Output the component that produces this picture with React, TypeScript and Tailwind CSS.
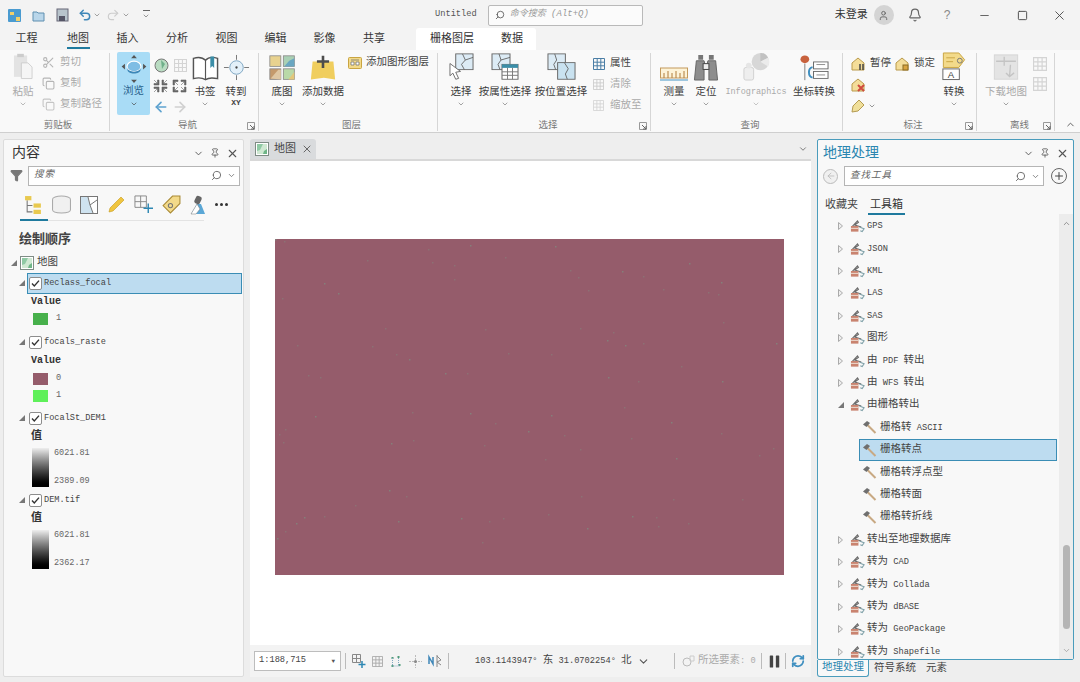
import { ReactNode } from "react";
import { X, ChevronDown, ChevronUp, Search, Pin, Bell, User, Minus, Square, Filter, RefreshCw, ArrowLeft, ArrowRight, Plus, Scissors, Copy, Pause, Undo2, Redo2 } from "lucide-react";

const font = "font-['Liberation_Mono','Noto_Sans_CJK_SC',monospace]";

// latin runs are set smaller than the CJK ones next to them
function Txt({ children }: { children: string }) {
  return (
    <>
      {children.split(/([\x00-\x7f°]+)/).map((run, i) =>
        i % 2 ? (
          <span key={i} className="text-[8.700px]">{run}</span>
        ) : (
          <span key={i}>{run}</span>
        )
      )}
    </>
  );
}

// ---- drawn icons ----
function MapIcon({ size = 14 }: { size?: number }) {
  return (
    <svg width={size} height={size} viewBox="0 0 14 14" className="shrink-0">
      <rect x="0.5" y="0.5" width="13" height="13" fill="#fff" stroke="#7f8c85" />
      <path d="M2 2h10v10H2z" fill="#cfe8d2" />
      <path d="M2 2h6L5 8l-3 1z" fill="#8fc9a4" />
      <path d="M9 9l3-2v5H8z" fill="#6fb587" />
    </svg>
  );
}

function ToolboxIcon() {
  return (
    <svg width="15" height="14" viewBox="0 0 16 14" className="shrink-0">
      <path d="M2 8L8 1.5 9 3 5 6l7 2" fill="none" stroke="#6b6b6b" strokeWidth="1.2" />
      <path d="M1 7h8v6H1z" fill="#c9836f" />
      <path d="M1 9h8v1H1z" fill="#efe2d8" />
      <path d="M10 8l5 2-2 3-2-1" fill="none" stroke="#7fa0a8" strokeWidth="1.2" />
    </svg>
  );
}

function HammerIcon() {
  return (
    <svg width="15" height="15" viewBox="0 0 15 15" className="shrink-0">
      <path d="M5.5 5l8 8" stroke="#c8a983" strokeWidth="2" />
      <path d="M1 4.5L5 1l3 2-3.5 4z" fill="#6f6f6f" />
    </svg>
  );
}

function Check() {
  return (
    <span className="flex h-[13px] w-[13px] shrink-0 items-center justify-center rounded-[2px] border border-[#8d8d8d] bg-white">
      <svg width="9" height="9" viewBox="0 0 9 9">
        <path d="M1 4.5l2.3 2.5L8 1.6" fill="none" stroke="#333" strokeWidth="1.4" />
      </svg>
    </span>
  );
}

const Expanded = () => (
  <svg width="6" height="6" viewBox="0 0 6 6" className="shrink-0">
    <path d="M6 0v6H0z" fill="#777" />
  </svg>
);

const Collapsed = () => (
  <svg width="5" height="8" viewBox="0 0 5 8" className="shrink-0">
    <path d="M.5.5l4 3.5-4 3.5z" fill="#eee" stroke="#aaa" />
  </svg>
);

const Basemap = () => (
  <svg width="27" height="26" viewBox="0 0 32 32" preserveAspectRatio="none">
    <rect x="1" y="1" width="13" height="13" fill="#e8d28f" stroke="#8a8a8a" />
    <rect x="17" y="1" width="13" height="13" fill="#a9d0b4" stroke="#8a8a8a" />
    <path d="M18 14l6-7 6-3v10z" fill="#6aa7c2" />
    <rect x="1" y="17" width="13" height="13" fill="#c49a6c" stroke="#8a8a8a" />
    <path d="M2 29l9-11h3v12z" fill="#dfc7a3" />
    <rect x="17" y="17" width="13" height="13" fill="#b9d9a8" stroke="#8a8a8a" />
    <path d="M23 30l7-9v9z" fill="#e4c77b" />
  </svg>
);

const AddData = () => (
  <svg width="26" height="26" viewBox="0 0 30 32" preserveAspectRatio="none">
    <path d="M3 8h24l2 22-13-2-15 2z" fill="#f0ce5e" />
    <path d="M15 1v15M8 8h14" stroke="#4d4d4d" strokeWidth="3" />
  </svg>
);

const SelectMap = () => (
  <svg width="25" height="28" viewBox="0 0 26 32" preserveAspectRatio="none">
    <rect x="7" y="1" width="18" height="18" fill="#dcebf5" stroke="#666" />
    <path d="M14 1l3 7-4 5 3 6M17 8l8-3" fill="none" stroke="#666" />
    <path d="M1 12l11 9-5 1 3 7-3 1-3-7-3 3z" fill="#fff" stroke="#666" />
  </svg>
);

const AttrSelect = () => (
  <svg width="28" height="28" viewBox="0 0 28 32" preserveAspectRatio="none">
    <rect x="1" y="1" width="18" height="18" fill="#dcebf5" stroke="#666" />
    <path d="M8 1l2 7-3 5 2 6M10 8l9-3" fill="none" stroke="#666" />
    <rect x="11" y="13" width="16" height="17" fill="#fff" stroke="#666" />
    <rect x="11" y="13" width="16" height="4" fill="#3b8ea8" />
    <path d="M11 21.5h16M11 25.5h16M16.500 17v13M21.500 17v13" stroke="#777" />
  </svg>
);

const LocSelect = () => (
  <svg width="29" height="28" viewBox="0 0 30 32" preserveAspectRatio="none">
    <rect x="1" y="1" width="18" height="18" fill="#dcebf5" stroke="#666" />
    <path d="M8 1l2 7-3 5 2 6" fill="none" stroke="#666" />
    <rect x="11" y="11" width="18" height="19" fill="#c9e2f0" stroke="#666" />
    <path d="M18 11l4 7-3 6 2 6" fill="none" stroke="#666" />
  </svg>
);

const Explore = () => (
  <svg width="28" height="28" viewBox="0 0 30 34">
    <path d="M15 0l3.500 4h-7zM15 34l-3.500-4h7zM0 14l4-3.500v7zM30 14l-4-3.500v7z" fill="#555" />
    <ellipse cx="15" cy="14" rx="8.500" ry="6.500" fill="#7fbde4" stroke="#fff" strokeWidth="1.500" />
    <path d="M7 15c0 7 16 7 16 0v3c0 6-16 6-16 0z" fill="#3c87b8" />
  </svg>
);

const Book = () => (
  <svg width="27" height="26" viewBox="0 0 28 26">
    <path d="M14 5C10 1 5 2 1.500 3v21c4-1 9-1 12.500 1 3-2 8-2 12.500-1V3c-3-1-9-2-12.500 2z" fill="#fff" stroke="#555" strokeWidth="1.500" />
    <path d="M14 5v20" stroke="#555" strokeWidth="1.200" />
    <path d="M19 1h4v12l-2-2-2 2z" fill="#3b8ea8" />
  </svg>
);

const GoTo = () => (
  <svg width="27" height="27" viewBox="0 0 28 28">
    <circle cx="14" cy="14" r="7" fill="#e3f0f9" stroke="#7ea6c2" />
    <circle cx="14" cy="14" r="1.200" fill="#444" />
    <path d="M14 1v5M14 22v5M1 14h5M22 14h5" stroke="#777" />
  </svg>
);

const Measure = () => (
  <svg width="28" height="14" viewBox="0 0 28 14">
    <rect x="0.500" y="1" width="27" height="10" fill="#fdf3d7" stroke="#c39a5c" />
    <path d="M4 11V6M8 11V4M12 11V6M16 11V4M20 11V6M24 11V4" stroke="#b07d3a" />
    <path d="M0 13h28" stroke="#7fb6d6" strokeWidth="1.500" />
  </svg>
);

const Binoculars = () => (
  <svg width="26" height="27" viewBox="0 0 26 28">
    <path d="M5 1h5v5H5zM16 1h5v5h-5z" fill="#777" />
    <path d="M3 7h8l1 4h2l1-4h8l2 20h-9V16h-5v11H1z" fill="#8d8d8d" stroke="#666" />
    <rect x="10" y="10" width="6" height="6" fill="#eee" stroke="#444" />
  </svg>
);

const Infographics = () => (
  <svg width="29" height="29" viewBox="0 0 30 30">
    <circle cx="19" cy="10" r="9" fill="#d7d7d7" />
    <path d="M19 10V1a9 9 0 0 1 8 5z" fill="#c2c2c2" />
    <path d="M19 10l8-4a9 9 0 0 1 0 9z" fill="#ebebeb" />
    <rect x="2" y="16" width="10" height="13" rx="2" fill="#eee" stroke="#d0d0d0" />
    <circle cx="7" cy="14" r="3" fill="#e6e6e6" />
  </svg>
);

const ConvertCoord = () => (
  <svg width="29" height="26" viewBox="0 0 30 30" preserveAspectRatio="none">
    <path d="M5 10v19" stroke="#777" />
    <circle cx="5" cy="5" r="4.500" fill="#c8623e" />
    <rect x="14" y="8" width="15" height="8" fill="#fff" stroke="#666" />
    <rect x="14" y="19" width="15" height="8" fill="#fff" stroke="#666" />
    <path d="M17 11h9M17 23h9" stroke="#888" />
    <path d="M13 14c-5 1-5 11 0 12" fill="none" stroke="#3f8fc0" strokeWidth="2" />
  </svg>
);

const TagConvert = () => (
  <svg width="26" height="29" viewBox="0 0 26 30">
    <path d="M2 1h16l6 7-6 8H2z" fill="#f3da8a" stroke="#c9a542" />
    <path d="M5 6h9M5 10h7" stroke="#c9a542" />
    <circle cx="19" cy="9" r="2.500" fill="none" stroke="#777" />
    <rect x="1.500" y="17.500" width="17" height="11" fill="#fff" stroke="#666" />
    <text x="10" y="27" fontSize="10" textAnchor="middle" fill="#444" fontFamily="Liberation Sans">A</text>
  </svg>
);

const Download = () => (
  <svg width="26" height="27" viewBox="0 0 28 30">
    <rect x="1" y="1" width="26" height="27" fill="#e4e4e4" stroke="#d4d4d4" />
    <path d="M3 8h22M12 3v10M19 12l-1 12M14 21l4 4 5-4" stroke="#c4c4c4" strokeWidth="1.500" fill="none" />
  </svg>
);

const House = ({ mark }: { mark: "pause" | "lock" | "x" }) => (
  <svg width="15" height="15" viewBox="0 0 15 15" className="shrink-0">
    <path d="M1 7l6-5 6 5v7H1z" fill="#f4dd99" stroke="#b99a4c" />
    {mark === "pause" && <path d="M9 8v6M12 8v6" stroke="#444" strokeWidth="1.500" />}
    {mark === "lock" && <rect x="8" y="9" width="5" height="5" fill="#d9a441" stroke="#8a6a20" />}
    {mark === "x" && <path d="M7 8l6 6M13 8l-6 6" stroke="#d04b3e" strokeWidth="2" />}
  </svg>
);

const Grid = ({ size = 12, color = "#bbb" }: { size?: number; color?: string }) => (
  <svg width={size} height={size} viewBox="0 0 12 12" className="shrink-0">
    <path d="M.5.5h11v11H.5zM4.200.5v11M7.800.5v11M.5 4.200h11M.5 7.800h11" fill="none" stroke={color} />
  </svg>
);

const Dialog = () => (
  <svg width="8" height="8" viewBox="0 0 8 8">
    <path d="M.5.5h7v7h-7z" fill="none" stroke="#999" />
    <path d="M3 3l4 4M7 4v3H4" fill="none" stroke="#666" />
  </svg>
);

// the 4x2 block of fixed-zoom arrows in the nav group
const ZoomArrows = () => {
  const arrow = (x: number, y: number, r: number) => (
    <path key={`${x}-${y}`} d="M0 0h5v1.500H1.500V5H0zM1 1l4 4" transform={`translate(${x} ${y}) rotate(${r} 2.500 2.500)`} fill="#666" stroke="#666" strokeWidth=".6" />
  );
  return (
    <svg width="34" height="14" viewBox="0 0 34 14">
      {arrow(1, 1, 180)}
      {arrow(9, 1, 270)}
      {arrow(20, 1, 0)}
      {arrow(28, 1, 90)}
      {arrow(1, 8, 90)}
      {arrow(9, 8, 0)}
      {arrow(20, 8, 270)}
      {arrow(28, 8, 180)}
    </svg>
  );
};

// ---- ribbon pieces ----
function Large({ w, icon, label, sub, chev = true, off = false }: { w: string; icon: ReactNode; label: string; sub?: string; chev?: boolean; off?: boolean }) {
  return (
    <div className={`flex shrink-0 flex-col items-center ${w}`}>
      <div className="flex h-[28px] items-end justify-center">{icon}</div>
      <span className={`mt-[4px] whitespace-nowrap text-[10.500px] leading-[14px] ${off ? "text-[#aaa]" : "text-[#3c3c3c]"}`}>{label}</span>
      {sub && <span className="text-[8px] font-bold leading-[8px] text-[#444]">{sub}</span>}
      {chev && <ChevronDown size={8} strokeWidth={2} className="mt-[1px] text-[#777]" />}
    </div>
  );
}

function Small({ icon, label, off = false }: { icon: ReactNode; label: string; off?: boolean }) {
  return (
    <div className="flex h-[21px] items-center gap-[3px]">
      <span className="flex w-[17px] justify-center">{icon}</span>
      <span className={`whitespace-nowrap text-[10.500px] ${off ? "text-[#aaa]" : "text-[#444]"}`}>{label}</span>
    </div>
  );
}

function Group({ w, label, launcher, children }: { w: string; label: string; launcher?: boolean; children: ReactNode }) {
  return (
    <div className={`relative flex h-full shrink-0 flex-col border-r border-[#d6d6d6] ${w}`}>
      <div className="flex flex-1 items-start">{children}</div>
      <div className="flex h-[14px] translate-y-[2px] items-center justify-center text-[9.500px] text-[#777]">{label}</div>
      {launcher && (
        <span className="absolute bottom-[1px] right-[3px] flex">
          <Dialog />
        </span>
      )}
    </div>
  );
}

function Ribbon() {
  return (
    <div className="flex h-[83px] shrink-0 border-b border-[#cfcfcf] bg-[#f9f9f9] pb-[1px] pt-[3px]">
      <Group w="w-[110px] pl-[7px]" label="剪贴板">
        <div className="flex w-[32px] flex-col items-center">
          <svg width="24" height="28" viewBox="0 0 26 34">
            <rect x="2" y="3" width="16" height="26" fill="#e3e3e3" />
            <rect x="6" y="1" width="8" height="4" fill="#ccc" />
            <path d="M11 12h8l5 5v14H11z" fill="#f5f5f5" stroke="#c9c9c9" />
          </svg>
          <span className="mt-[4px] text-[10.500px] leading-[14px] text-[#aaa]">粘贴</span>
          <ChevronDown size={8} className="mt-[1px] text-[#999]" />
        </div>
        <div className="-mt-[1px] ml-[1px] flex flex-col">
          <Small off icon={<Scissors size={13} className="text-[#b5b5b5]" />} label="剪切" />
          <Small off icon={<Copy size={13} className="text-[#b5b5b5]" />} label="复制" />
          <Small off icon={<Copy size={13} className="text-[#c5c5c5]" />} label="复制路径" />
        </div>
      </Group>
      <Group w="w-[149px] pl-[7px]" label="导航" launcher>
        <div className="-mt-[1px] flex h-[63px] w-[33px] shrink-0 flex-col items-center rounded-[2px] bg-[#a9dcf6] pt-[3px]">
          <Explore />
          <span className="mt-[2px] text-[10.500px] leading-[13px] text-[#27618c]">浏览</span>
          <ChevronDown size={8} className="mt-[2px] text-[#444]" />
        </div>
        <div className="ml-[2px] flex w-[36px] shrink-0 flex-col items-center">
          <div className="flex h-[22px] items-center gap-[5px] pt-[2px]">
            <svg width="15" height="15" viewBox="0 0 15 15">
              <circle cx="7.500" cy="7.500" r="6.500" fill="#b9dcc2" stroke="#777" />
              <path d="M7 2l4 4-3 5z" fill="#6fb08a" />
            </svg>
            <Grid size={13} color="#d4d4d4" />
          </div>
          <div className="flex h-[22px] items-center">
            <ZoomArrows />
          </div>
          <div className="flex h-[20px] items-center gap-[3px]">
            <ArrowLeft size={16} strokeWidth={2.500} className="text-[#5ea2cf]" />
            <ArrowRight size={16} strokeWidth={2.500} className="text-[#d0d0d0]" />
          </div>
        </div>
        <Large w="w-[34px]" icon={<Book />} label="书签" />
        <Large w="w-[32px] -ml-[2px]" icon={<GoTo />} label="转到" sub="XY" chev={false} />
      </Group>
      <Group w="w-[179px] pl-[7px]" label="图层">
        <Large w="w-[32px]" icon={<Basemap />} label="底图" />
        <Large w="w-[50px] ml-[7px] -translate-x-[7px]" icon={<AddData />} label="添加数据" />
        <div className="-ml-[9px] -mt-[1px]">
          <Small
            icon={
              <svg width="14" height="12" viewBox="0 0 14 12">
                <rect x="0.500" y="0.500" width="13" height="11" rx="1" fill="#f3da8a" stroke="#c9a542" />
                <path d="M3 5h3v3H3zM8 5h3v3H8zM3 3h8" fill="#fff" stroke="#666" strokeWidth="0.700" />
              </svg>
            }
            label="添加图形图层"
          />
        </div>
      </Group>
      <Group w="w-[213px] pl-[8px]" label="选择" launcher>
        <Large w="w-[30px]" icon={<SelectMap />} label="选择" />
        <Large w="w-[54px] ml-[2px]" icon={<AttrSelect />} label="按属性选择" />
        <Large w="w-[54px] ml-[2px]" icon={<LocSelect />} label="按位置选择" chev={false} />
        <div className="ml-[2px] flex flex-col">
          <Small icon={<Grid size={12} color="#4b7ea6" />} label="属性" />
          <Small off icon={<Grid size={11} color="#ccc" />} label="清除" />
          <Small off icon={<Grid size={11} color="#d5d5d5" />} label="缩放至" />
        </div>
      </Group>
      <Group w="w-[192px] pl-[7px]" label="查询">
        <Large w="w-[32px]" icon={<Measure />} label="测量" />
        <Large w="w-[32px]" icon={<Binoculars />} label="定位" />
        <div className="ml-[3px] flex w-[62px] shrink-0 flex-col items-center">
          <div className="flex h-[28px] items-end"><Infographics /></div>
          <span className="mt-[4px] text-[8.500px] leading-[14px] text-[#aaa]">Infographics</span>
          <ChevronDown size={8} className="mt-[1px] text-[#aaa]" />
        </div>
        <Large w="w-[46px] ml-[4px]" icon={<ConvertCoord />} label="坐标转换" chev={false} />
      </Group>
      <Group w="w-[134px] pl-[7px]" label="标注" launcher>
        <div className="flex w-[88px] shrink-0 flex-col">
          <div className="flex">
            <Small icon={<House mark="pause" />} label="暂停" />
            <span className="ml-[3px]"><Small icon={<House mark="lock" />} label="锁定" /></span>
          </div>
          <div className="flex h-[21px] items-center pl-[1px]"><House mark="x" /></div>
          <div className="flex h-[21px] items-center gap-[3px] pl-[1px]">
            <svg width="14" height="14" viewBox="0 0 14 14">
              <path d="M1 13l1-6 6-6 5 5-6 6z" fill="#f0df9a" stroke="#b49b52" />
            </svg>
            <ChevronDown size={8} className="text-[#666]" />
          </div>
        </div>
        <Large w="w-[28px] ml-[2px]" icon={<TagConvert />} label="转换" />
      </Group>
      <Group w="w-[78px] pl-[8px]" label="离线" launcher>
        <Large w="w-[42px]" icon={<Download />} label="下载地图" off />
        <div className="ml-[6px] flex flex-col gap-[6px] pt-[4px]">
          <Grid size={14} color="#d4d4d4" />
          <Grid size={14} color="#d4d4d4" />
        </div>
      </Group>
      <div className="flex flex-1 items-end justify-center pb-[1px] pl-[5px]">
        <ChevronUp size={11} className="text-[#555]" />
      </div>
    </div>
  );
}

function TitleBar() {
  return (
    <div className="flex h-[28px] shrink-0 items-center bg-[#f3f3f3] pl-[8px] pt-[2px]">
      <svg width="13" height="13" viewBox="0 0 13 13">
        <rect width="13" height="13" rx="1" fill="#4a9bd0" />
        <path d="M2 3h4v3H2zM8 8h4v4H8z" fill="#f1d06a" />
      </svg>
      <svg width="13" height="13" viewBox="0 0 13 13" className="ml-[11px]">
        <path d="M1 3h4l1 1h6v8H1z" fill="#b9d6ea" stroke="#5f8fb0" />
      </svg>
      <svg width="13" height="14" viewBox="0 0 13 14" className="ml-[11px]">
        <rect x="1" y="1" width="11" height="12" fill="#b8c4cc" stroke="#667" />
        <rect x="3" y="8" width="6" height="5" fill="#556" />
      </svg>
      <Undo2 size={14} strokeWidth={2.500} className="ml-[9px] text-[#3f87b8]" />
      <ChevronDown size={8} className="ml-[1px] text-[#777]" />
      <Redo2 size={14} className="ml-[5px] text-[#ccc]" />
      <ChevronDown size={8} className="ml-[2px] text-[#777]" />
      <span className="ml-[12px] flex flex-col items-center gap-[1px]">
        <span className="h-px w-[7px] bg-[#666]" />
        <ChevronDown size={8} className="text-[#666]" />
      </span>
      <span className="ml-[285px] text-[8.700px] text-[#555]">Untitled</span>
      <div className="ml-[11px] flex h-[21px] w-[155px] items-center rounded-[2px] border border-[#b9b9b9] bg-[#fbfbfb] pl-[6px]">
        <Search size={10} className="-scale-x-100 text-[#555]" />
        <span className="ml-[5px] text-[9px] italic text-[#999]">命令搜索 (Alt+Q)</span>
      </div>
      <span className="ml-[192px] text-[11px] text-[#333]">未登录</span>
      <span className="ml-[6px] flex h-[20px] w-[20px] items-center justify-center rounded-full bg-[#d4d4d4]">
        <User size={11} className="text-[#666]" />
      </span>
      <Bell size={14} className="ml-[14px] text-[#666]" />
      <span className="ml-[22px] font-['Liberation_Sans'] text-[12px] text-[#888]">?</span>
      <Minus size={13} className="ml-[28px] text-[#666]" />
      <Square size={11} className="ml-[26px] text-[#444]" />
      <X size={15} strokeWidth={1.400} className="ml-[24px] text-[#444]" />
    </div>
  );
}

function TabRow() {
  const tabs: [string, string][] = [
    ["工程", "w-[53px]"],
    ["地图", "w-[50px]"],
    ["插入", "w-[49px]"],
    ["分析", "w-[50px]"],
    ["视图", "w-[49px]"],
    ["编辑", "w-[49px]"],
    ["影像", "w-[49px]"],
    ["共享", "w-[50px]"],
  ];
  return (
    <div className="flex h-[22px] shrink-0 items-start bg-[#f3f3f3]">
      {tabs.map(([t, w]) => (
        <div key={t} className={`flex h-[22px] flex-col items-center pt-[4px] text-[11px] leading-[14px] text-[#333] ${w}`}>
          <span>{t}</span>
          {t === "地图" && <span className="mt-[1px] h-[2px] w-[23px] bg-[#1f7a9e]" />}
        </div>
      ))}
      <div className="ml-[17px] flex h-[22px] w-[120px] items-center justify-between rounded-t-[3px] bg-white pl-[14px] pr-[13px] pt-[1px] text-[11px] text-[#333]">
        <span>栅格图层</span>
        <span>数据</span>
      </div>
    </div>
  );
}

function PanelHead({ title, blue }: { title: string; blue?: boolean }) {
  return (
    <div className="flex h-[24px] shrink-0 items-center justify-between pl-[5px] pr-[4px]">
      <span className={`text-[14px] ${blue ? "text-[#2b86b0]" : "text-[#333]"}`}>{title}</span>
      <span className="flex items-center gap-[6px] text-[#555]">
        <ChevronDown size={11} />
        <Pin size={10} />
        <X size={13} />
      </span>
    </div>
  );
}

function SearchBox({ w, text }: { w: string; text: string }) {
  return (
    <div className={`flex h-[20px] items-center justify-between border border-[#b5b5b5] bg-white pl-[5px] pr-[3px] ${w}`}>
      <span className="text-[9.500px] italic tracking-[1px] text-[#666]">{text}</span>
      <span className="flex items-center gap-[5px] text-[#666]">
        <Search size={11} className="-scale-x-100" />
        <ChevronDown size={9} />
      </span>
    </div>
  );
}

function Legend({ top, low }: { top: string; low: string }) {
  return (
    <div className="flex h-[39px] pl-[28px] text-[8.500px] text-[#666]">
      <div className="h-[39px] w-[17px] bg-gradient-to-b from-[#eeeeee] to-[#000000]" />
      <div className="ml-[5px] flex flex-col justify-between leading-[11px]">
        <span>{top}</span>
        <span>{low}</span>
      </div>
    </div>
  );
}

function Layer({ name, active }: { name: string; active?: boolean }) {
  return (
    <div className="flex h-[22px] items-center pl-[15px] pr-[1px]">
      <Expanded />
      <div className={`ml-[2px] flex h-[21px] flex-1 items-center gap-[2px] pl-[1px] text-[8.600px] text-[#444] ${active ? "border border-[#3a8db5] bg-[#bddcf0]" : "border border-transparent"}`}>
        <Check />
        <span>{name}</span>
      </div>
    </div>
  );
}

function Swatch({ color, label }: { color: string; label: string }) {
  return (
    <div className="flex h-[17px] items-center pl-[29px] text-[8.600px] text-[#666]">
      <span className="h-[12px] w-[15px]" style={{ background: color }} />
      <span className="ml-[8px]">{label}</span>
    </div>
  );
}

function ContentsPanel() {
  return (
    <div className="flex h-[538px] w-[241px] shrink-0 flex-col rounded-[2px] border border-[#dcdcdc] bg-[#f8f8f8] pt-[1px]">
      <div className="pl-[3px]"><PanelHead title="内容" /></div>
      <div className="flex h-[21px] items-center gap-[5px] pl-[6px]">
        <Filter size={13} fill="#777" className="text-[#777]" />
        <SearchBox w="w-[212px]" text="搜索" />
      </div>
      <div className="ml-[16px] mt-[5px] w-[184px] border-b border-[#e3e3e3]">
        <div className="flex h-[27px] items-center gap-[9px] pl-[4px] [&>*]:shrink-0">
          <svg width="19" height="19" viewBox="0 0 18 18">
            <path d="M3 5v11h5M3 10h5" fill="none" stroke="#777" />
            <rect x="1" y="1" width="6" height="4" fill="#e8c94f" />
            <rect x="9" y="8" width="7" height="4" fill="#e8c94f" />
            <rect x="9" y="14" width="7" height="4" fill="#e8c94f" />
          </svg>
          <svg width="19" height="19" viewBox="0 0 18 18">
            <ellipse cx="9" cy="4" rx="8.500" ry="3" fill="#f0f0f0" stroke="#aaa" />
            <path d="M.5 4v10c0 4 17 4 17 0V4" fill="#f0f0f0" stroke="#aaa" />
          </svg>
          <svg width="18" height="18" viewBox="0 0 18 18">
            <rect x=".5" y=".5" width="17" height="17" fill="#fff" stroke="#777" />
            <path d="M1 1h7l2 8 3 8H1z" fill="#cfe3f0" />
            <path d="M8 1l2 8 3 8M10 9l7-5" fill="none" stroke="#777" />
          </svg>
          <svg width="18" height="18" viewBox="0 0 18 18">
            <path d="M2 16l1-4L14 1l3 3L6 15z" fill="#f0c53f" stroke="#c59a1f" strokeWidth=".6" />
          </svg>
          <svg width="19" height="19" viewBox="0 0 20 20">
            <path d="M1 1h12v12H1zM7 1v12M1 7h12" fill="none" stroke="#888" />
            <path d="M15 9v10M10 14h10" stroke="#2d87b3" strokeWidth="1.500" />
          </svg>
          <svg width="19" height="19" viewBox="0 0 18 18">
            <path d="M1 10L10 1h7v7l-9 9z" fill="#f3da8a" stroke="#a98a35" />
            <circle cx="8" cy="10" r="2" fill="none" stroke="#777" />
          </svg>
          <svg width="16" height="20" viewBox="0 0 16 20">
            <path d="M7 9L1 19h14l-4-10z" fill="#5aa7d6" />
            <path d="M7 9l3 5-4 5H1z" fill="#fff" stroke="#777" strokeWidth=".5" />
            <rect x="5" y="1" width="6" height="8" rx="2" transform="rotate(25 8 5)" fill="#666" />
          </svg>
          <span className="flex gap-[2px]">
            <span className="h-[3px] w-[3px] rounded-full bg-[#333]" />
            <span className="h-[3px] w-[3px] rounded-full bg-[#333]" />
            <span className="h-[3px] w-[3px] rounded-full bg-[#333]" />
          </span>
        </div>
        <div className="h-[2px] w-[28px] translate-y-px bg-[#1f7a9e]" />
      </div>
      <div className="ml-[15px] mt-[8px] h-[22px] text-[13px] font-bold leading-[22px] text-[#444]">绘制顺序</div>
      <div className="flex h-[21px] items-center gap-[3px] pl-[7px] pt-[2px] text-[10.500px] text-[#444]">
        <Expanded />
        <MapIcon />
        <span>地图</span>
      </div>
      <Layer name="Reclass_focal" active />
      <div className="h-[15px] pl-[27px] text-[10px] font-bold leading-[15px] text-[#333]">Value</div>
      <div className="pt-[1px]"><Swatch color="#47b04b" label="1" /></div>
      <div className="pt-[4px]"><Layer name="focals_raste" /></div>
      <div className="h-[15px] pl-[27px] text-[10px] font-bold leading-[15px] text-[#333]">Value</div>
      <div className="pt-[2px]">
        <Swatch color="#955c6b" label="0" />
        <Swatch color="#5ff05a" label="1" />
      </div>
      <div className="pt-[3px]"><Layer name="FocalSt_DEM1" /></div>
      <div className="h-[19px] pl-[27px] text-[11px] font-bold leading-[15px] text-[#333]">值</div>
      <Legend top="6021.81" low="2389.09" />
      <div className="pt-[2px]"><Layer name="DEM.tif" /></div>
      <div className="h-[19px] pl-[27px] text-[11px] font-bold leading-[15px] text-[#333]">值</div>
      <Legend top="6021.81" low="2362.17" />
    </div>
  );
}

// fixed speckle positions in the raster
const specks = Array.from({ length: 90 }, (_, i) => ({
  x: (i * 197 + (i * i * 13) % 89) % 505,
  y: (i * 83 + (i * i * 7) % 61) % 332,
}));

function MapView() {
  return (
    <div className="flex h-[538px] w-[561px] shrink-0 flex-col">
      <div className="flex h-[20px] shrink-0 items-end justify-between bg-[#eeeeee]">
        <div className="flex h-[20px] w-[66px] items-center gap-[5px] rounded-t-[3px] bg-[#d9dbdd] pl-[5px] text-[11px] text-[#444]">
          <MapIcon />
          <span>地图</span>
          <X size={12} className="text-[#666]" />
        </div>
        <ChevronDown size={10} className="mb-[5px] mr-[3px] text-[#666]" />
      </div>
      <div className="flex h-[486px] shrink-0 items-start border-t-2 border-[#d8d8d8] bg-white pl-[25px] pt-[78px]">
        <svg width="509" height="336" viewBox="0 0 509 336" className="block">
          <rect width="509" height="336" fill="#955c6b" />
          {specks.map((s, i) => (
            <rect key={i} x={s.x} y={s.y} width="1.500" height="1.500" fill={i % 3 ? "#8a7a78" : "#7f8f80"} opacity="0.7" />
          ))}
        </svg>
      </div>
      <div className="flex h-[32px] shrink-0 items-center bg-[#f3f3f3] pl-[4px] text-[10.500px] text-[#444]">
        <div className="flex h-[20px] w-[87px] items-center justify-between border border-[#bdbdbd] bg-white pl-[4px] pr-[5px] text-[8.700px]">
          <span>1:188,715</span>
          <span className="text-[6px] text-[#555]">▼</span>
        </div>
        <span className="ml-[4px] h-[16px] w-px bg-[#bbb]" />
        <span className="ml-[6px] flex items-center gap-[6px]">
          <svg width="14" height="14" viewBox="0 0 14 14">
            <path d="M.5.5h8v8h-8zM4.500.5v8M.5 4.500h8" fill="none" stroke="#888" />
            <path d="M10 7v7M6.500 10.500h7" stroke="#2d87b3" strokeWidth="1.500" />
          </svg>
          <Grid size={11} color="#aaa" />
          <svg width="14" height="13" viewBox="0 0 13 13">
            <path d="M2 2h2v2H2zM8 1h2v2H8zM2 10h2v2H2zM9 9h2v2H9z" fill="#4f9b78" />
            <path d="M3 11h7M9 3v7M3 3v7" stroke="#7fa6c0" strokeDasharray="1 1" />
          </svg>
          <svg width="13" height="13" viewBox="0 0 13 13">
            <path d="M6.500 0v13M0 6.500h13" stroke="#bbb" strokeDasharray="2 1" />
            <circle cx="6.500" cy="6.500" r="1.500" fill="#888" />
          </svg>
          <svg width="14" height="14" viewBox="0 0 14 14">
            <path d="M1 10V3l4 7V3" fill="none" stroke="#3f87b8" strokeWidth="1.500" />
            <path d="M9 1v12M9 2l4 4-4 2 4 3" fill="none" stroke="#888" />
          </svg>
        </span>
        <span className="ml-[6px] h-[16px] w-px bg-[#bbb]" />
        <span className="ml-[26px] w-[156px] whitespace-pre"><Txt>103.1143947° 东 31.0702254° 北</Txt></span>
        <ChevronDown size={13} className="ml-[6px] text-[#555]" />
        <span className="ml-[24px] h-[16px] w-px bg-[#bbb]" />
        <svg width="14" height="14" viewBox="0 0 14 14" className="ml-[6px] shrink-0">
          <circle cx="6" cy="8" r="4" fill="none" stroke="#bbb" />
          <path d="M9 2h4v5H9z" fill="none" stroke="#ccc" />
        </svg>
        <span className="ml-[3px] w-[57px] whitespace-pre text-[#aaa]"><Txt>所选要素: 0</Txt></span>
        <span className="ml-[6px] h-[16px] w-px bg-[#bbb]" />
        <Pause size={13} fill="#444" strokeWidth={0} className="ml-[6px] scale-125 text-[#444]" />
        <span className="ml-[4px] h-[16px] w-px bg-[#bbb]" />
        <RefreshCw size={14} strokeWidth={3} className="ml-[5px] text-[#3f8fc0]" />
      </div>
    </div>
  );
}

const tools: { name: string; kind?: "tool" | "open" | "sel" }[] = [
  { name: "GPS" },
  { name: "JSON" },
  { name: "KML" },
  { name: "LAS" },
  { name: "SAS" },
  { name: "图形" },
  { name: "由 PDF 转出" },
  { name: "由 WFS 转出" },
  { name: "由栅格转出", kind: "open" },
  { name: "栅格转 ASCII", kind: "tool" },
  { name: "栅格转点", kind: "sel" },
  { name: "栅格转浮点型", kind: "tool" },
  { name: "栅格转面", kind: "tool" },
  { name: "栅格转折线", kind: "tool" },
  { name: "转出至地理数据库" },
  { name: "转为 CAD" },
  { name: "转为 Collada" },
  { name: "转为 dBASE" },
  { name: "转为 GeoPackage" },
  { name: "转为 Shapefile" },
];

function ToolRow({ name, kind }: { name: string; kind?: "tool" | "open" | "sel" }) {
  if (kind === "tool" || kind === "sel") {
    return (
      <div className="flex h-[22.400px] items-center pl-[41px] pr-[2px]">
        <div className={`flex h-[22px] flex-1 items-center gap-[3px] pl-[2px] text-[10.500px] text-[#444] ${kind === "sel" ? "border border-[#3a8db5] bg-[#bddcf0]" : "border border-transparent"}`}>
          <HammerIcon />
          <span className="whitespace-pre"><Txt>{name}</Txt></span>
        </div>
      </div>
    );
  }
  return (
    <div className="flex h-[22.400px] items-center pl-[20px] text-[10.500px] text-[#444]">
      {kind === "open" ? <Expanded /> : <Collapsed />}
      <span className={kind === "open" ? "ml-[6px]" : "ml-[7px]"}><ToolboxIcon /></span>
      <span className="ml-[2px] whitespace-pre"><Txt>{name}</Txt></span>
    </div>
  );
}

function GeoPanel() {
  return (
    <div className="flex h-[538px] w-[257px] shrink-0 flex-col">
      <div className="flex h-[521px] flex-col rounded-[2px] border border-[#4a9cbc] bg-[#f8f8f8] pt-[1px]">
        <PanelHead title="地理处理" blue />
        <div className="flex h-[22px] items-center pl-[5px]">
          <span className="flex h-[15px] w-[15px] items-center justify-center rounded-full border border-[#bbb] bg-[#f0f0f0]">
            <ArrowLeft size={10} className="text-[#bbb]" />
          </span>
          <span className="ml-[6px]"><SearchBox w="w-[200px]" text="查找工具" /></span>
          <span className="ml-[7px] flex h-[16px] w-[16px] items-center justify-center rounded-full border border-[#666]">
            <Plus size={12} className="text-[#444]" />
          </span>
        </div>
        <div className="flex h-[27px] items-start gap-[10px] pl-[7px] pt-[11px] text-[11px] leading-[15px] text-[#444]">
          <span>收藏夹</span>
          <span className="flex flex-col items-center text-[#333]">
            工具箱
            <span className="h-[1.500px] w-[37px] bg-[#1f7a9e]" />
          </span>
        </div>
        <div className="flex min-h-0 flex-1">
          <div className="flex-1 overflow-hidden pt-[1px]">
            {tools.map((t) => (
              <ToolRow key={t.name} name={t.name} kind={t.kind} />
            ))}
          </div>
          <div className="flex w-[14px] shrink-0 flex-col items-center justify-between bg-[#ececec] pb-[4px] pt-[5px]">
            <ChevronUp size={9} className="text-[#777]" />
            <div className="flex flex-col items-center gap-[17px]">
              <span className="h-[84px] w-[7px] rounded-[4px] bg-[#b5b5b5]" />
              <ChevronDown size={9} className="text-[#999]" />
            </div>
          </div>
        </div>
      </div>
      <div className="flex h-[17px] items-center text-[10.500px] text-[#444]">
        <span className="flex h-[17px] w-[52px] items-center justify-center rounded-b-[3px] border border-t-0 border-[#4a9cbc] bg-[#f8f8f8] text-[#2b86b0]">地理处理</span>
        <span className="ml-[5px]">符号系统</span>
        <span className="ml-[10px]">元素</span>
      </div>
    </div>
  );
}

export default function App() {
  return (
    <div className={`flex h-[682px] w-[1080px] flex-col overflow-hidden bg-[#eeeeee] ${font}`}>
      <TitleBar />
      <TabRow />
      <Ribbon />
      <div className="flex flex-1 gap-[6px] pl-[3px] pt-[6px]">
        <ContentsPanel />
        <MapView />
        <GeoPanel />
      </div>
    </div>
  );
}
